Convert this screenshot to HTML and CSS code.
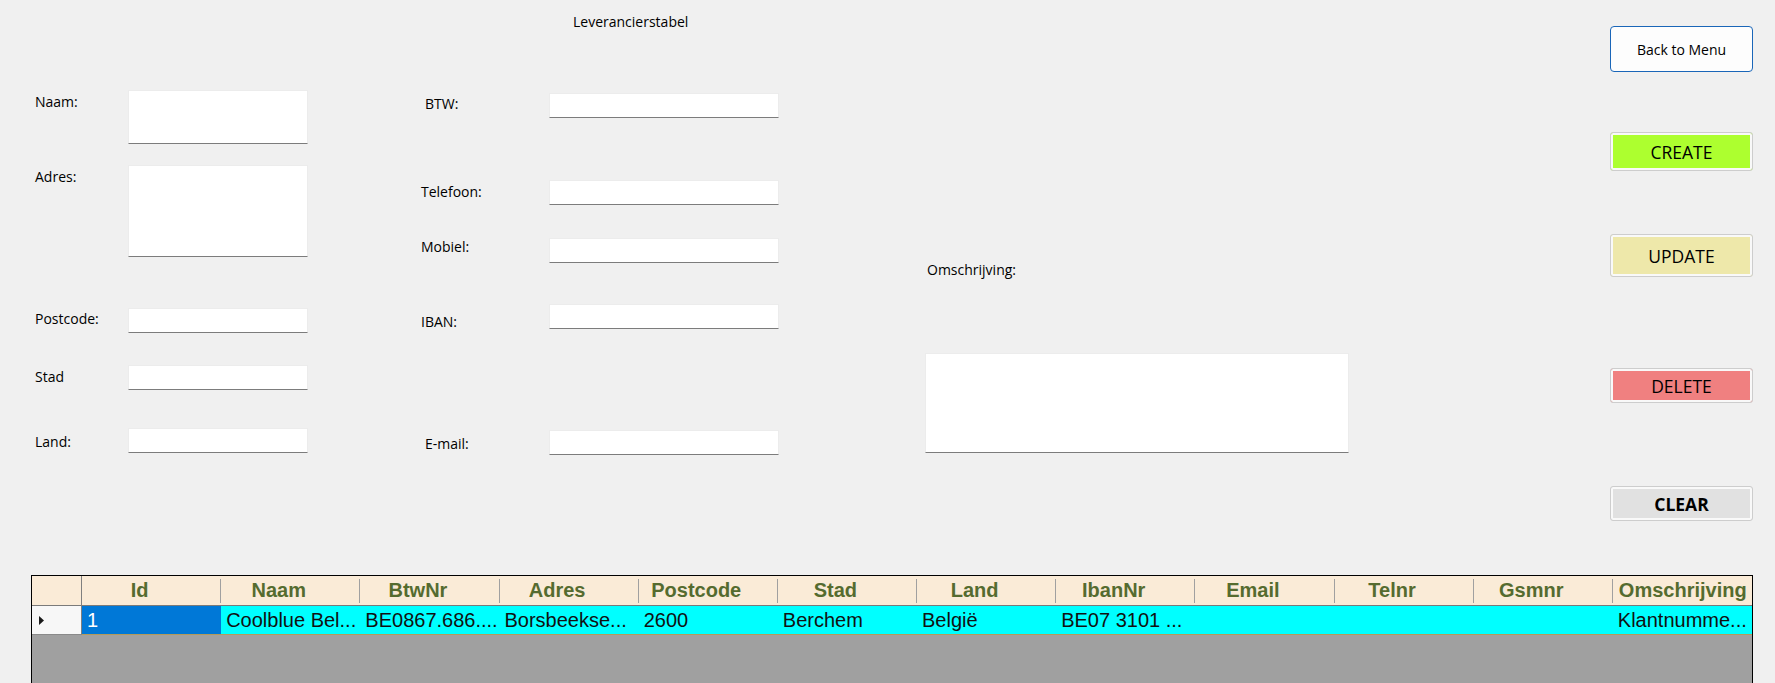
FILE: index.html
```html
<!DOCTYPE html>
<html lang="nl">
<head>
<meta charset="utf-8">
<title>Leverancierstabel</title>
<link rel="stylesheet" href="styles.css">
</head>
<body>
<main class="window">
  <section class="form">
    <div class="col col-left">
      <div class="field f-naam">
        <label class="lbl">Naam:</label>
        <textarea class="box box-naam"></textarea>
      </div>
      <div class="field f-adres">
        <label class="lbl">Adres:</label>
        <textarea class="box box-adres"></textarea>
      </div>
      <div class="field f-postcode">
        <label class="lbl">Postcode:</label>
        <input class="box" type="text">
      </div>
      <div class="field f-stad">
        <label class="lbl">Stad</label>
        <input class="box" type="text">
      </div>
      <div class="field f-land">
        <label class="lbl">Land:</label>
        <input class="box" type="text">
      </div>
    </div>

    <div class="col col-mid">
      <h1 class="title">Leverancierstabel</h1>
      <div class="field f-btw">
        <label class="lbl lbl-indent">BTW:</label>
        <input class="box" type="text">
      </div>
      <div class="field f-tel">
        <label class="lbl">Telefoon:</label>
        <input class="box" type="text">
      </div>
      <div class="field f-gsm">
        <label class="lbl">Mobiel:</label>
        <input class="box" type="text">
      </div>
      <div class="field f-iban">
        <label class="lbl">IBAN:</label>
        <input class="box" type="text">
      </div>
      <div class="field f-email">
        <label class="lbl lbl-indent">E-mail:</label>
        <input class="box" type="text">
      </div>
    </div>

    <div class="col col-notes">
      <label class="lbl lbl-notes">Omschrijving:</label>
      <textarea class="box box-notes"></textarea>
    </div>

    <div class="col col-actions">
      <button class="btn btn-back" type="button">Back to Menu</button>
      <button class="btn btn-action btn-create" type="button">CREATE</button>
      <button class="btn btn-action btn-update" type="button">UPDATE</button>
      <button class="btn btn-action btn-delete" type="button">DELETE</button>
      <button class="btn btn-action btn-clear" type="button">CLEAR</button>
    </div>
  </section>

  <section class="grid">
    <div class="grid-head">
      <div class="rh"></div>
      <div class="hc">Id</div>
      <div class="hc">Naam</div>
      <div class="hc">BtwNr</div>
      <div class="hc">Adres</div>
      <div class="hc">Postcode</div>
      <div class="hc">Stad</div>
      <div class="hc">Land</div>
      <div class="hc">IbanNr</div>
      <div class="hc">Email</div>
      <div class="hc">Telnr</div>
      <div class="hc">Gsmnr</div>
      <div class="hc hc-last">Omschrijving</div>
    </div>
    <div class="grid-row">
      <div class="rh">
        <svg class="row-arrow" width="5" height="9" viewBox="0 0 5 9"><polygon points="0,0 5,4.5 0,9" fill="#1a1a1a"/></svg>
      </div>
      <div class="cell cell-sel">1</div>
      <div class="cell">Coolblue Bel...</div>
      <div class="cell">BE0867.686....</div>
      <div class="cell">Borsbeekse...</div>
      <div class="cell">2600</div>
      <div class="cell">Berchem</div>
      <div class="cell">België</div>
      <div class="cell">BE07 3101 ...</div>
      <div class="cell"></div>
      <div class="cell"></div>
      <div class="cell"></div>
      <div class="cell">Klantnumme...</div>
    </div>
  </section>
</main>
</body>
</html>
```

FILE: styles.css
```css
* {
  box-sizing: border-box;
}

html,
body {
  margin: 0;
  padding: 0;
}

body {
  width: 1775px;
  height: 683px;
  overflow: hidden;
  background: #f0f0f0;
  color: #000;
  font-family: "Open Sans", "Noto Sans", sans-serif;
  font-size: 14px;
}

/* ---------- form area ---------- */

.form {
  display: flex;
  align-items: flex-start;
  height: 575px;
}

.col {
  display: flex;
  flex-direction: column;
  align-items: flex-start;
}

.col-left {
  margin-left: 35px;
  width: 273px;
}

.col-mid {
  margin-left: 113px;
  width: 358px;
}

.col-notes {
  margin-left: 146px;
  width: 424px;
}

.col-actions {
  margin-left: 261px;
  width: 143px;
}

.field {
  display: flex;
  align-items: flex-start;
}

.lbl {
  display: block;
  line-height: 19px;
  white-space: nowrap;
}

.col-left .lbl {
  width: 93px;
}

.col-mid .lbl {
  width: 128px;
}

.lbl-indent {
  padding-left: 4px;
}

.title {
  margin: 12px 0 0 152px;
  font-size: 14px;
  font-weight: normal;
  line-height: 19px;
}

/* text boxes */
.box {
  display: block;
  margin: 0;
  padding: 0;
  height: 25px;
  background: #fff;
  border: 1px solid #ececec;
  border-bottom: 1px solid #7c7c7c;
  border-radius: 0;
  font: inherit;
  resize: none;
  outline: none;
}

.col-left .box {
  width: 180px;
}

.col-mid .box {
  width: 230px;
}

.box-naam {
  height: 54px;
}

.box-adres {
  height: 92px;
}

/* left column rows */
.f-naam { margin-top: 90px; }
.f-naam .lbl { margin-top: 2px; }

.f-adres { margin-top: 21px; }
.f-adres .lbl { margin-top: 2px; }

.f-postcode { margin-top: 51px; }
.f-postcode .lbl { margin-top: 1px; }

.f-stad { margin-top: 32px; }
.f-stad .lbl { margin-top: 2px; }

.f-land { margin-top: 38px; }
.f-land .lbl { margin-top: 4px; }

/* middle column rows */
.f-btw { margin-top: 62px; }
.f-btw .lbl { margin-top: 1px; }

.f-tel { margin-top: 62px; }
.f-tel .lbl { margin-top: 2px; }

.f-gsm { margin-top: 33px; }
.f-gsm .lbl { margin-top: -1px; }

.f-iban { margin-top: 41px; }
.f-iban .lbl { margin-top: 8px; }

.f-email { margin-top: 99px; }
.f-email .lbl { margin-top: 4px; }

/* description */
.lbl-notes {
  margin-top: 260px;
  padding-left: 2px;
}

.box-notes {
  margin-top: 74px;
  width: 424px;
  height: 100px;
}

/* ---------- buttons ---------- */

.btn {
  display: flex;
  align-items: center;
  justify-content: center;
  width: 143px;
  margin: 0;
  padding: 0;
  font-family: "Open Sans", "Noto Sans", sans-serif;
  color: #000;
  cursor: pointer;
}

.btn-back {
  margin-top: 26px;
  height: 46px;
  background: #fdfdfd;
  border: 1px solid #1a66b8;
  border-radius: 4px;
  font-size: 14px;
}

.btn-action {
  border: 1px solid #cdcdcd;
  border-radius: 3px;
  box-shadow: inset 0 0 0 2px #f9f9f9;
  font-size: 17.5px;
}

.btn-create {
  margin-top: 60px;
  height: 39px;
  background: #adff2f;
}

.btn-update {
  margin-top: 63px;
  height: 43px;
  background: #eee8aa;
}

.btn-delete {
  margin-top: 91px;
  height: 35px;
  background: #f08080;
}

.btn-clear {
  margin-top: 83px;
  height: 35px;
  background: #e1e1e1;
  font-weight: bold;
}

/* ---------- data grid ---------- */

.grid {
  margin-left: 31px;
  width: 1722px;
  height: 200px;
  border: 1px solid #000;
  background: #a0a0a0;
  font-family: "Liberation Sans", Arial, sans-serif;
  font-size: 20px;
}

.grid-head,
.grid-row {
  display: grid;
  grid-template-columns: 50px repeat(12, 1fr);
}

.grid-head {
  height: 30px;
  background: #faebd7;
}

.grid-head > div {
  border-bottom: 1px solid #7a7a7a;
}

.rh {
  border-right: 1px solid #7f7f7f;
}

/* header text sits left of the sort-glyph space */
.hc {
  position: relative;
  padding-right: 24px;
  text-align: center;
  font-weight: bold;
  color: #556b2f;
  line-height: 29px;
  white-space: nowrap;
  overflow: hidden;
}

/* thin column divider inside the header band */
.hc::after {
  content: "";
  position: absolute;
  right: 0;
  top: 3px;
  bottom: 2px;
  width: 1px;
  background: #a0a0a0;
}

.hc-last {
  padding: 0 0 0 6px;
  text-align: left;
}

.hc-last::after {
  display: none;
}

.grid-row {
  height: 29px;
  background: #00ffff;
}

.grid-row .rh {
  display: flex;
  align-items: center;
  padding-left: 7px;
  background: #f7f7f7;
  border-bottom: 1px solid #8a8a8a;
}

.row-arrow {
  display: block;
}

.cell {
  padding-left: 5px;
  line-height: 28px;
  white-space: nowrap;
  overflow: hidden;
  color: #111;
  border-bottom: 1px solid #b49a5a;
}

.cell-sel {
  background: #0078d7;
  color: #fff;
}
```
